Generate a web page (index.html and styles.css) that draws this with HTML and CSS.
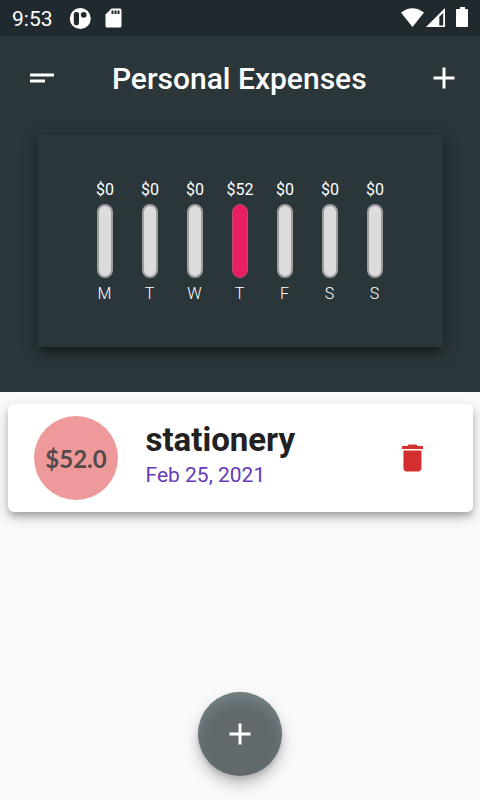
FILE: index.html
```html
<!DOCTYPE html>
<html lang="en">
<head>
<meta charset="utf-8">
<title>Personal Expenses</title>
<link rel="stylesheet" href="styles.css">
</head>
<body>
<header class="top">
  <div class="status">
    <span class="clock">9:53</span>
    <svg class="app-icon" width="22" height="22" viewBox="0 0 22 22"><circle cx="11.300" cy="10.500" r="10.500" fill="#fff"/><rect x="4.800" y="4" width="5.200" height="13.200" rx="2.200" fill="#20292d"/><circle cx="14.700" cy="6.800" r="2.900" fill="#20292d"/></svg>
    <svg class="sd-icon" width="17" height="20" viewBox="0 0 17 20"><path fill="#fff" d="M6.500 .5H15Q16.500 .5 16.500 2V18Q16.500 19.500 15 19.500H2Q.5 19.500 .5 18V6.500Z"/><path stroke="#20292d" stroke-width="2" d="M7.500 2.500V6M10.500 2.500V6M13.500 2.500V6"/></svg>
    <svg class="signals" width="70" height="22" viewBox="0 0 70 22"><path fill="#fff" d="M1 5.500Q12.400-3 24 5.500L12.500 20Z"/><path fill="#fff" d="M26 20L45 1V20Z"/><path fill="#20292d" d="M39.300 9.800L43.200 6V18.500H39.300Z"/><path fill="#fff" d="M60 0H65V2H67Q68 2 68 3V19Q68 20 67 20H57Q56 20 56 19V3Q56 2 57 2H60Z"/></svg>
  </div>
  <div class="appbar">
    <svg width="36" height="36" viewBox="0 0 24 24" fill="#fff"><path d="M4 9h16v2H4zM4 13h10v2H4z"/></svg>
    <h1>Personal Expenses</h1>
    <svg width="36" height="36" viewBox="0 0 24 24" fill="#fff"><path d="M19 13h-6v6h-2v-6H5v-2h6V5h2v6h6v2z"/></svg>
  </div>
  <section class="chart">
    <div class="day"><span class="sum">$0</span><i class="bar"></i><span class="name">M</span></div>
    <div class="day"><span class="sum">$0</span><i class="bar"></i><span class="name">T</span></div>
    <div class="day"><span class="sum">$0</span><i class="bar"></i><span class="name">W</span></div>
    <div class="day"><span class="sum">$52</span><i class="bar full"></i><span class="name">T</span></div>
    <div class="day"><span class="sum">$0</span><i class="bar"></i><span class="name">F</span></div>
    <div class="day"><span class="sum">$0</span><i class="bar"></i><span class="name">S</span></div>
    <div class="day"><span class="sum">$0</span><i class="bar"></i><span class="name">S</span></div>
  </section>
</header>
<main>
  <article class="expense">
    <div class="amount">$52.0</div>
    <div class="info"><h2>stationery</h2><p>Feb 25, 2021</p></div>
    <svg class="delete" width="36" height="36" viewBox="0 0 24 24" fill="#d32f2f"><path d="M6.300 19c0 1.100.9 2 2 2h8c1.100 0 2-.9 2-2V7h-12v12zM19.300 4h-3.500l-1-1h-5l-1 1h-3.500v2h14V4z"/></svg>
  </article>
</main>
<button class="fab" aria-label="Add"><svg width="36" height="36" viewBox="0 0 24 24" fill="#fff"><path d="M19 13h-6v6h-2v-6H5v-2h6V5h2v6h6v2z"/></svg></button>
</body>
</html>
```
FILE: styles.css
```css
* { box-sizing: border-box; }
body {
  margin: 0;
  height: 800px;
  overflow: hidden;
  display: flex;
  flex-direction: column;
  align-items: center;
  background: #fafafa;
  font-family: Roboto, sans-serif;
}
h1, h2, p { margin: 0; }
svg { display: block; flex: none; }
.top { width: 480px; height: 392px; background: #2b363b; }
.status {
  height: 36px;
  padding: 0 10px 0 12px;
  display: flex;
  align-items: center;
  background: #20292d;
  color: #fff;
}
.clock { width: 57px; font-size: 21px; line-height: 36px; padding-top: 2px; }
.app-icon { margin: 1px 14px 0 0; }
.signals { margin: 0 0 0 auto; }
.appbar {
  height: 84px;
  padding: 0 18px 0 24px;
  display: flex;
  align-items: center;
  justify-content: space-between;
}
.signals { padding-top: 0; }
.appbar h1 { color: #fff; font-size: 30px; font-weight: 500; line-height: 36px; margin: 2px 7.5px 0 0; white-space: nowrap; }
.chart {
  width: 405px;
  height: 212px;
  margin: 15px auto 0;
  padding-top: 45px;
  display: flex;
  justify-content: center;
  background: #2b363b;
  box-shadow: 0 7px 8px -3px rgba(0,0,0,.32), 0 5px 15px 1px rgba(0,0,0,.32);
}
.day { width: 45px; display: flex; flex-direction: column; align-items: center; color: #fff; font-size: 16px; line-height: 20px; }
.bar { width: 16px; height: 74px; margin: 4px 0 6px; border: 2px solid #9e9e9e; border-radius: 8px; background: #dcdcdc; }
.full { border: 1px solid #bd4a72; background: #e91e63; }
.name { font-weight: 300; margin-right: 1px; }
.expense {
  width: 465px;
  height: 108px;
  margin-top: 12px;
  padding: 0 42.5px 0 26.5px;
  display: flex;
  align-items: center;
  background: #fff;
  border-radius: 6px;
  box-shadow: 0 5px 6px -1px rgba(0,0,0,.2), 0 5px 14px rgba(0,0,0,.22);
}
.amount {
  width: 84px;
  height: 84px;
  border-radius: 50%;
  background: #ef9a9a;
  color: #544a4c;
  font: 700 24px/85px Lato, sans-serif;
  text-align: center;
  white-space: nowrap;
}
.info { margin-left: 27.5px; padding-bottom: 9px; }
.info h2 { color: #212121; font-size: 33px; font-weight: 700; line-height: 39px; white-space: nowrap; }
.info p { color: #673ab7; font-size: 21px; line-height: 25px; margin-top: 4px; white-space: nowrap; }
.delete { margin-left: auto; }
.fab {
  width: 84px;
  height: 84px;
  margin: auto 0 24px;
  padding: 0;
  border: 0;
  border-radius: 50%;
  display: grid;
  place-items: center;
  background: #61696d;
  box-shadow: inset 0 9px 14px -2px rgba(129,145,149,.65), 0 8px 15px rgba(0,0,0,.24), 0 3px 5px rgba(0,0,0,.12);
}
```
